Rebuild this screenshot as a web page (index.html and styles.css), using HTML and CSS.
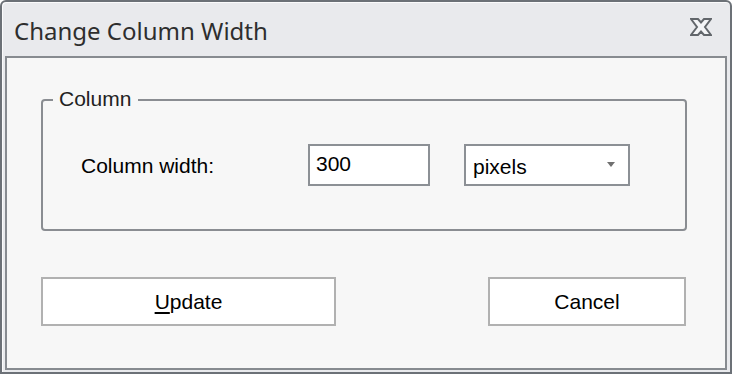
FILE: index.html
```html
<!DOCTYPE html>
<html>
<head>
<meta charset="utf-8">
<link rel="stylesheet" href="styles.css">
</head>
<body>
<div class="window">
  <div class="titlebar">
    <span class="title">Change Column Width</span>
    <svg class="close" width="22" height="18" viewBox="0 0 22 18">
      <polygon points="1,1 8,1 11,4.5 14,1 21,1 15,9 21,17 14,17 11,13.5 8,17 1,17 7,9" fill="#f4f5f7" stroke="#62666b" stroke-width="2" stroke-linejoin="miter"/>
    </svg>
  </div>
  <div class="panel">
    <div class="group">
      <span class="legend">Column</span>
      <div class="row">
        <span class="label">Column width:</span>
        <div class="input">300</div>
        <div class="select">
          <span>pixels</span>
          <span class="arrow"></span>
        </div>
      </div>
    </div>
    <div class="buttons">
      <div class="btn btn-update"><span><u>U</u>pdate</span></div>
      <div class="btn btn-cancel"><span>Cancel</span></div>
    </div>
  </div>
</div>
</body>
</html>
```

FILE: styles.css
```css
html, body {
  margin: 0;
  padding: 0;
  background: #ffffff;
}
.window {
  width: 732px;
  height: 374px;
  box-sizing: border-box;
  border: 2px solid #6c7177;
  border-radius: 6px 6px 0 0;
  background: #e9eaed;
  padding: 0 3px 2px 3px;
  display: flex;
  flex-direction: column;
  box-shadow: inset 1px 1px 0 #fbfbfc;
}
.titlebar {
  height: 54px;
  flex: none;
  display: flex;
  align-items: center;
  justify-content: space-between;
  padding: 4px 15px 0 9px;
  box-sizing: border-box;
}
.title {
  font-family: "Noto Sans", sans-serif;
  font-size: 24px;
  color: #2e2e2e;
  line-height: 28px;
}
.close {
  display: block;
  margin-top: -8px;
}
.panel {
  flex: 1;
  border: 2px solid #878b90;
  background: #f7f7f7;
  display: flex;
  flex-direction: column;
  font-family: "Liberation Sans", Arial, sans-serif;
  font-size: 21px;
  color: #000;
}
.group {
  position: relative;
  margin: 41px 38px 0 34px;
  height: 132px;
  box-sizing: border-box;
  border: 2px solid #8a8d92;
  border-radius: 4px;
  padding: 43px 0 0 38px;
}
.legend {
  position: absolute;
  left: 10px;
  top: -14px;
  padding: 0 7px 0 6px;
  background: #f7f7f7;
  line-height: 24px;
  color: #222;
}
.row {
  display: flex;
  align-items: center;
  height: 42px;
}
.label {
  width: 227px;
  flex: none;
  padding-top: 2px;
}
.input {
  width: 122px;
  height: 42px;
  box-sizing: border-box;
  border: 2px solid #8c9095;
  background: #fff;
  padding: 5px 0 0 6px;
  line-height: 26px;
}
.select {
  margin-left: 34px;
  width: 166px;
  height: 42px;
  box-sizing: border-box;
  border: 2px solid #8c9095;
  background: #fff;
  display: flex;
  align-items: center;
  justify-content: space-between;
  padding: 4px 13px 0 7px;
  line-height: 26px;
}
.arrow {
  width: 0;
  height: 0;
  border-left: 4.5px solid transparent;
  border-right: 4.5px solid transparent;
  border-top: 5px solid #707070;
  margin-top: -6px;
}
.buttons {
  display: flex;
  justify-content: space-between;
  margin: 46px 39px 0 34px;
}
.btn {
  height: 49px;
  box-sizing: border-box;
  border: 2px solid #b1b1b1;
  background: #fff;
  display: flex;
  align-items: center;
  justify-content: center;
  line-height: 26px;
}
.btn u {
  text-underline-offset: 3px;
}
.btn-update {
  width: 295px;
}
.btn-cancel {
  width: 198px;
}
```
